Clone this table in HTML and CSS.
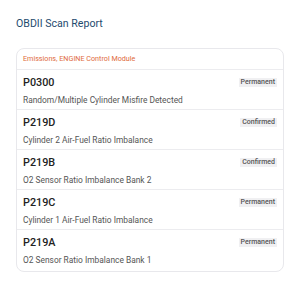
FILE: index.html
```html
<!DOCTYPE html>
<html>
<head>
<meta charset="utf-8">
<link rel="stylesheet" href="styles.css">
</head>
<body>
<h1 class="title">OBDII Scan Report</h1>
<div class="card">
  <div class="card-head">Emissions, ENGINE Control Module</div>
  <div class="row">
    <div class="row-top"><span class="code">P0300</span><span class="badge">Permanent</span></div>
    <div class="desc">Random/Multiple Cylinder Misfire Detected</div>
  </div>
  <div class="row">
    <div class="row-top"><span class="code">P219D</span><span class="badge">Confirmed</span></div>
    <div class="desc">Cylinder 2 Air-Fuel Ratio Imbalance</div>
  </div>
  <div class="row">
    <div class="row-top"><span class="code">P219B</span><span class="badge">Confirmed</span></div>
    <div class="desc">O2 Sensor Ratio Imbalance Bank 2</div>
  </div>
  <div class="row">
    <div class="row-top"><span class="code">P219C</span><span class="badge">Permanent</span></div>
    <div class="desc">Cylinder 1 Air-Fuel Ratio Imbalance</div>
  </div>
  <div class="row">
    <div class="row-top"><span class="code">P219A</span><span class="badge">Permanent</span></div>
    <div class="desc">O2 Sensor Ratio Imbalance Bank 1</div>
  </div>
</div>
</body>
</html>
```
FILE: styles.css
```css
html, body { margin: 0; padding: 0; background: #fff; }
body {
  font-family: Roboto, "Liberation Sans", sans-serif;
  padding: 18px 16px;
  width: 268px;
}
.title {
  margin: 0 0 18px 0;
  font-size: 10.6px;
  line-height: 12px;
  font-weight: 400;
  color: #1e4a6e;
}
.card {
  border: 1px solid #e8e8ec;
  border-radius: 8px;
  overflow: hidden;
}
.card-head {
  height: 20px;
  line-height: 20px;
  padding: 0 6px;
  font-size: 7.2px;
  color: #e06a3c;
  border-bottom: 1px solid #ececef;
}
.row {
  height: 39px;
  padding: 0 6px;
  border-bottom: 1px solid #ececef;
  box-sizing: content-box;
}
.row:last-child { border-bottom: none; height: 41px; }
.row-top {
  display: flex;
  justify-content: space-between;
  align-items: center;
  height: 22px;
  padding-top: 1px;
}
.code {
  font-size: 10.8px;
  font-weight: 500;
  color: #222;
}
.badge {
  font-size: 7px;
  font-weight: 500;
  color: #555;
  background: #f0f0f2;
  padding: 1px 2px;
  line-height: 7px;
}
.desc {
  font-size: 8.4px;
  color: #555;
  line-height: 14px;
}
```
